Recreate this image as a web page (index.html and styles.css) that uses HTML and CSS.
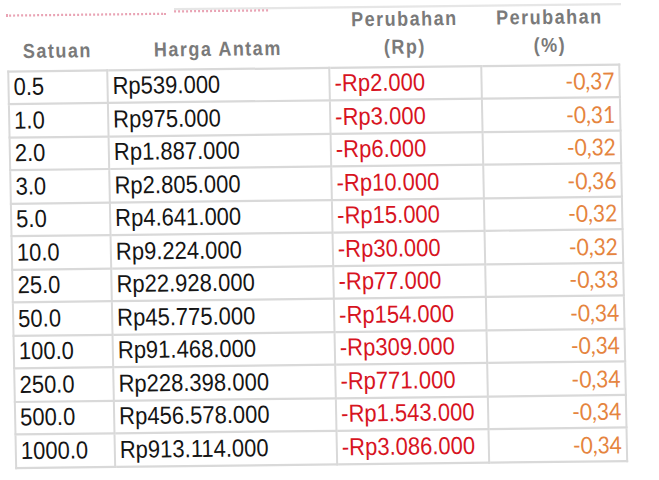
FILE: index.html
```html
<!DOCTYPE html>
<html lang="id">
<head>
<meta charset="utf-8">
<title>Harga Emas Antam</title>
<link rel="stylesheet" href="styles.css">
</head>
<body>
<div class="sheet">
  <div class="topline">
    <div class="seg1"></div>
    <div class="seg2"><div class="dots"></div></div>
  </div>
  <table class="prices">
    <colgroup>
      <col class="c1"><col class="c2"><col class="c3"><col class="c4">
    </colgroup>
    <thead>
      <tr>
        <th>Satuan</th>
        <th>Harga Antam</th>
        <th>Perubahan<br>(Rp)</th>
        <th>Perubahan<br>(%)</th>
      </tr>
    </thead>
    <tbody>
      <tr><td>0.5</td><td>Rp539.000</td><td class="neg">-Rp2.000</td><td class="pct">-0,37</td></tr>
      <tr><td>1.0</td><td>Rp975.000</td><td class="neg">-Rp3.000</td><td class="pct">-0,31</td></tr>
      <tr><td>2.0</td><td>Rp1.887.000</td><td class="neg">-Rp6.000</td><td class="pct">-0,32</td></tr>
      <tr><td>3.0</td><td>Rp2.805.000</td><td class="neg">-Rp10.000</td><td class="pct">-0,36</td></tr>
      <tr><td>5.0</td><td>Rp4.641.000</td><td class="neg">-Rp15.000</td><td class="pct">-0,32</td></tr>
      <tr><td>10.0</td><td>Rp9.224.000</td><td class="neg">-Rp30.000</td><td class="pct">-0,32</td></tr>
      <tr><td>25.0</td><td>Rp22.928.000</td><td class="neg">-Rp77.000</td><td class="pct">-0,33</td></tr>
      <tr><td>50.0</td><td>Rp45.775.000</td><td class="neg">-Rp154.000</td><td class="pct">-0,34</td></tr>
      <tr><td>100.0</td><td>Rp91.468.000</td><td class="neg">-Rp309.000</td><td class="pct">-0,34</td></tr>
      <tr><td>250.0</td><td>Rp228.398.000</td><td class="neg">-Rp771.000</td><td class="pct">-0,34</td></tr>
      <tr><td>500.0</td><td>Rp456.578.000</td><td class="neg">-Rp1.543.000</td><td class="pct">-0,34</td></tr>
      <tr><td>1000.0</td><td>Rp913.114.000</td><td class="neg">-Rp3.086.000</td><td class="pct">-0,34</td></tr>
    </tbody>
  </table>
</div>
</body>
</html>
```

FILE: styles.css
```css
html, body {
  margin: 0;
  padding: 0;
  background: #ffffff;
}

body {
  width: 659px;
  height: 480px;
  overflow: hidden;
  font-family: "Liberation Sans", Arial, sans-serif;
}

/* the photographed sheet is slightly skewed and stretched vertically */
.sheet {
  width: 611px;
  margin: 10px 0 0 6px;
  transform-origin: 0 0;
  transform: matrix(1, -0.0115, 0.0224, 1.12, 0, 0);
}

.topline {
  display: flex;
  align-items: flex-start;
  height: 0;
  gap: 8px;
}

.seg1 {
  width: 160px;
  margin-top: 3.5px;
  border-top: 2px dotted #e9a3b4;
}

.seg2 {
  flex: 1;
  border-top: 2px solid #e6e6e6;
  margin-right: -4px;
}

.dots {
  width: 94px;
  border-top: 2px dotted #e9a3b4;
}

.prices {
  width: 611px;
  border-collapse: collapse;
  table-layout: fixed;
}

.c1 { width: 99px; }
.c2 { width: 222px; }
.c3 { width: 152px; }
.c4 { width: 138px; }

.prices th {
  font-weight: bold;
  font-size: 18px;
  line-height: 25px;
  letter-spacing: 1.5px;
  color: #7a7a7a;
  text-align: center;
  vertical-align: bottom;
  padding: 0 0 3.5px 0;
}

.prices tbody tr {
  height: 29.5px;
}

.prices td {
  border: 2px solid #d9d9d9;
  font-size: 22px;
  line-height: 24px;
  color: #151515;
  padding: 0 4px;
  vertical-align: middle;
  white-space: nowrap;
}

.prices td.neg {
  color: #d7141f;
}

.prices td.pct {
  font-family: Lato, "Open Sans", sans-serif;
  font-size: 21px;
  color: #e5843e;
  text-align: right;
  padding-right: 4px;
}
```
